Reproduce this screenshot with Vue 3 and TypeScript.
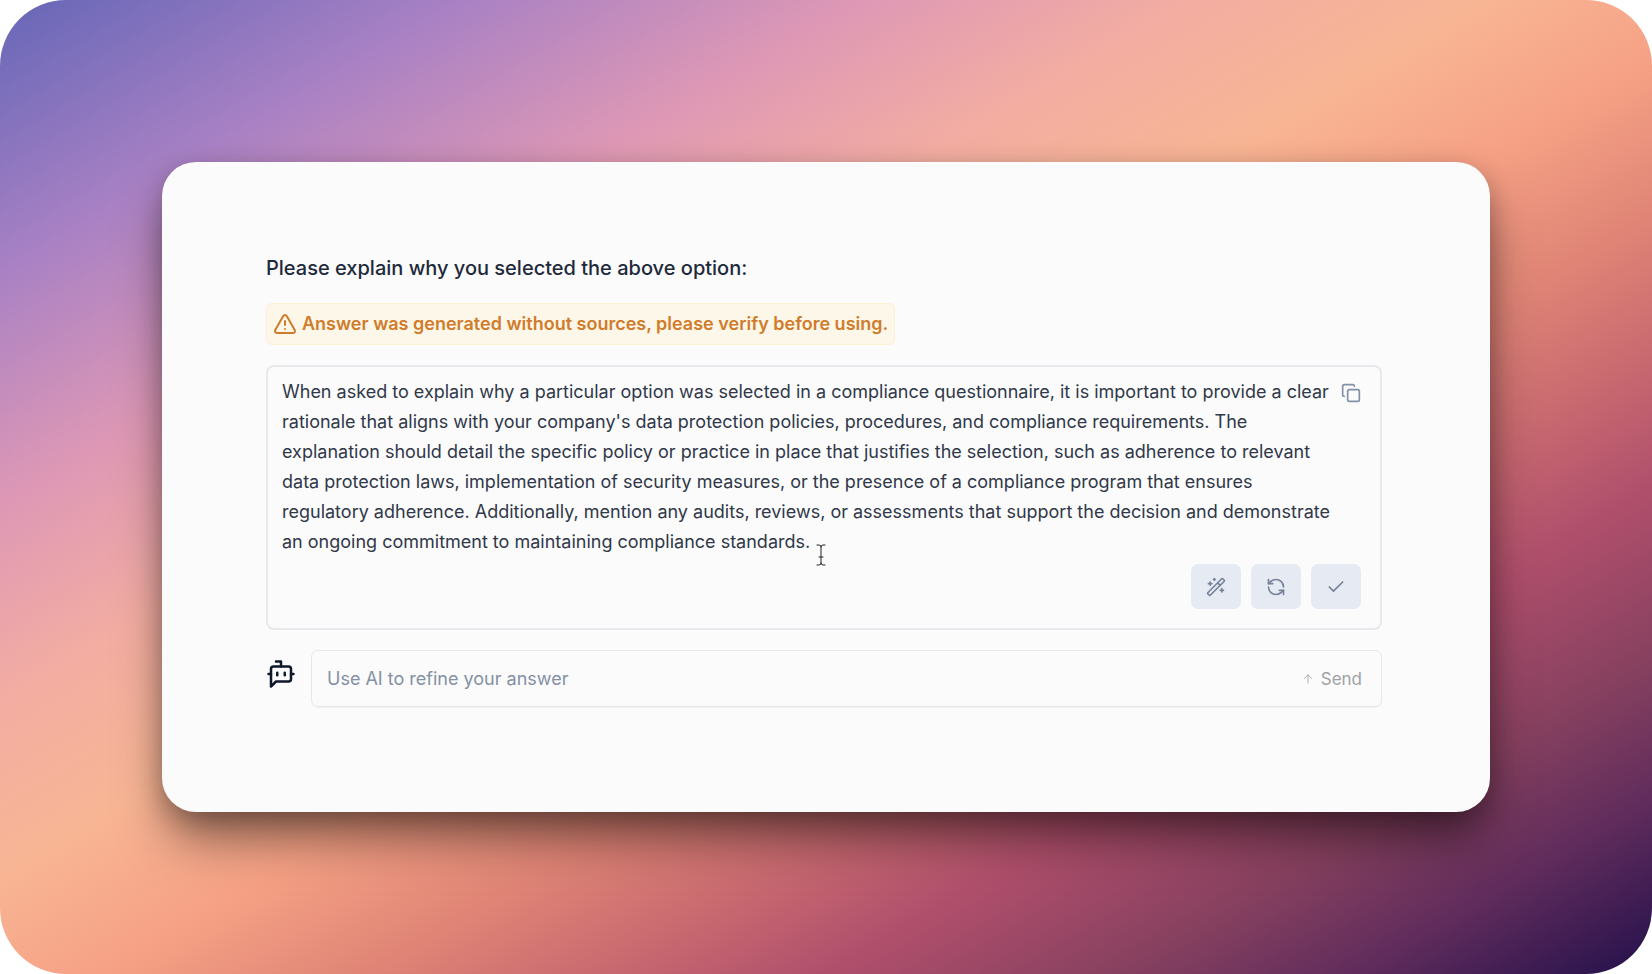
<script setup lang="ts">
import { ref } from 'vue'

const answer = ref<string>(
  "When asked to explain why a particular option was selected in a compliance questionnaire, it is important to provide a clear rationale that aligns with your company's data protection policies, procedures, and compliance requirements. The explanation should detail the specific policy or practice in place that justifies the selection, such as adherence to relevant data protection laws, implementation of security measures, or the presence of a compliance program that ensures regulatory adherence. Additionally, mention any audits, reviews, or assessments that support the decision and demonstrate an ongoing commitment to maintaining compliance standards."
)
const prompt = ref<string>('')

interface Action {
  id: string
  label: string
  paths: string[]
}

const actions: Action[] = [
  {
    id: 'improve',
    label: 'Improve answer',
    paths: [
      'm21.64 3.64-1.28-1.28a1.21 1.21 0 0 0-1.72 0L2.36 18.64a1.21 1.21 0 0 0 0 1.72l1.28 1.28a1.2 1.2 0 0 0 1.72 0L21.64 5.36a1.2 1.2 0 0 0 0-1.72',
      'm14 7 3 3',
      'M5 6v4',
      'M19 14v4',
      'M10 2v2',
      'M7 8H3',
      'M21 16h-4',
      'M11 3H9',
    ],
  },
  {
    id: 'regenerate',
    label: 'Regenerate answer',
    paths: [
      'M21 12a9 9 0 0 0-9-9 9.75 9.75 0 0 0-6.74 2.74L3 8',
      'M3 3v5h5',
      'M3 12a9 9 0 0 0 9 9 9.75 9.75 0 0 0 6.74-2.74L21 16',
      'M16 16h5v5',
    ],
  },
  { id: 'accept', label: 'Accept answer', paths: ['M20 6 9 17l-5-5'] },
]

async function copyAnswer(): Promise<void> {
  await navigator.clipboard?.writeText(answer.value)
}
</script>

<template>
  <main class="backdrop">
    <section class="card">
      <label class="question" for="answer">Please explain why you selected the above option:</label>

      <p class="notice" role="status">
        <svg class="notice-icon" viewBox="0 0 24 24" aria-hidden="true">
          <path d="m21.73 18-8-14a2 2 0 0 0-3.48 0l-8 14A2 2 0 0 0 4 21h16a2 2 0 0 0 1.73-3" />
          <path d="M12 9v4" />
          <path d="M12 17h.01" />
        </svg>
        <span>Answer was generated without sources, please verify before using.</span>
      </p>

      <div class="answer-box">
        <div class="answer-main">
          <textarea id="answer" v-model="answer" class="answer" rows="6" spellcheck="false"></textarea>
          <button class="copy" type="button" aria-label="Copy answer" @click="copyAnswer">
            <svg viewBox="0 0 24 24" aria-hidden="true">
              <rect x="8" y="8" width="14" height="14" rx="2" />
              <path d="M4 16c-1.1 0-2-.9-2-2V4c0-1.1.9-2 2-2h10c1.1 0 2 .9 2 2" />
            </svg>
          </button>
        </div>
        <div class="actions">
          <button v-for="a in actions" :key="a.id" class="action" type="button" :aria-label="a.label">
            <svg viewBox="0 0 24 24" aria-hidden="true">
              <path v-for="d in a.paths" :key="d" :d="d" />
            </svg>
          </button>
        </div>
        <svg class="text-cursor" viewBox="0 0 10 22" aria-hidden="true">
          <path d="M1 1h2q2 0 2 2v16q0 2-2 2H1M9 1H7q-2 0-2 2M9 21H7q-2 0-2-2M3 13h4" />
        </svg>
      </div>

      <form class="refine" @submit.prevent>
        <svg class="bot" viewBox="0 0 24 24" aria-hidden="true">
          <path d="M12 6V2H8" />
          <path d="m8 18-4 4V8a2 2 0 0 1 2-2h12a2 2 0 0 1 2 2v8a2 2 0 0 1-2 2Z" />
          <path d="M2 12h2" />
          <path d="M9 11v2" />
          <path d="M15 11v2" />
          <path d="M20 12h2" />
        </svg>
        <div class="refine-field">
          <input v-model="prompt" class="refine-input" type="text" aria-label="Use AI to refine your answer" placeholder="Use AI to refine your answer" />
          <button class="send" type="submit">
            <svg viewBox="0 0 12 12" aria-hidden="true">
              <path d="M6 11V1M1.500 5.500 6 1l4.500 4.500" />
            </svg>
            Send
          </button>
        </div>
      </form>
    </section>
  </main>
</template>

<style>
body {
  background: #ffffff;
}
</style>

<style scoped>
.backdrop {
  box-sizing: border-box;
  min-height: 100vh;
  padding: 162px;
  display: flex;
  align-items: center;
  border-radius: 66px;
  background: linear-gradient(
    to bottom right,
    #6566b7 0%,
    #a981c4 14%,
    #de98b5 26%,
    #f3ada2 36%,
    #f8b594 45%,
    #f6a185 53%,
    #e08576 61%,
    #c96a70 68%,
    #b04f6c 75%,
    #86405f 84%,
    #602c5c 91%,
    #2a134d 99%
  );
  font-family: Inter, "Liberation Sans", sans-serif;
  color: #1e293b;
}

.card {
  box-sizing: border-box;
  flex: 1;
  min-width: 0;
  padding: 92px 108px 105px 104px;
  display: flex;
  flex-direction: column;
  border-radius: 34px;
  background: #fbfbfb;
  box-shadow: 0 30px 50px -6px rgba(0, 0, 0, 0.5), 0 6px 24px rgba(0, 0, 0, 0.2);
}

button {
  padding: 0;
  border: 0;
  background: none;
  font: inherit;
  cursor: pointer;
}

svg {
  display: block;
  fill: none;
  stroke: currentColor;
  stroke-width: 2;
  stroke-linecap: round;
  stroke-linejoin: round;
}

.question {
  font-size: 20px;
  line-height: 28px;
  font-weight: 500;
}

.notice {
  box-sizing: border-box;
  align-self: flex-start;
  height: 42px;
  margin: 21px 0 20px;
  padding: 0 6px;
  display: flex;
  align-items: center;
  gap: 5px;
  border: 1px solid #fcf2cf;
  border-radius: 6px;
  background: #fcf7e8;
  color: #d07c2b;
  font-size: 18px;
  line-height: 24px;
  font-weight: 600;
}

.notice-icon {
  width: 24px;
  height: 24px;
}

.answer-box {
  position: relative;
  padding: 10px 19px 19px 14px;
  border: 2px solid #e8e9ec;
  border-radius: 8px;
}

.answer-main {
  display: flex;
  align-items: flex-start;
  gap: 6px;
}

.answer {
  display: block;
  flex: 1;
  min-width: 0;
  margin: 0;
  padding: 0;
  border: 0;
  outline: 0;
  overflow: hidden;
  resize: none;
  background: transparent;
  color: #303849;
  font-family: inherit;
  font-size: 18px;
  line-height: 30px;
}

.copy {
  margin-top: 6px;
  color: #8391a7;
}

.copy svg {
  width: 20px;
  height: 20px;
}

.actions {
  margin-top: 7px;
  display: flex;
  justify-content: flex-end;
  gap: 10px;
}

.action {
  width: 50px;
  height: 45px;
  display: grid;
  place-items: center;
  border-radius: 7px;
  background: #e6eaf2;
  color: #76839a;
}

.action svg {
  width: 20px;
  height: 20px;
}

.text-cursor {
  position: absolute;
  left: 548px;
  top: 177px;
  width: 10px;
  height: 22px;
  color: #222222;
  stroke-width: 1;
}

.refine {
  margin-top: 20px;
  display: flex;
  align-items: flex-start;
  gap: 15px;
}

.bot {
  width: 30px;
  height: 30px;
  margin-top: 9px;
  color: #0f172a;
}

.refine-field {
  box-sizing: border-box;
  flex: 1;
  min-width: 0;
  height: 57px;
  padding: 0 19px 0 15px;
  display: flex;
  align-items: center;
  border: 1px solid #e8e8ea;
  border-radius: 7px;
  box-shadow: 0 1px 1px rgba(0, 0, 0, 0.04);
}

.refine-input {
  flex: 1;
  min-width: 0;
  padding: 0;
  border: 0;
  outline: 0;
  background: transparent;
  color: #303849;
  font-family: inherit;
  font-size: 18px;
  line-height: 24px;
}

.refine-input::placeholder {
  color: #8490a4;
  opacity: 1;
}

.send {
  display: flex;
  align-items: center;
  gap: 8px;
  color: #a0a1a5;
  font-size: 17px;
  line-height: 24px;
}

.send svg {
  width: 10px;
  height: 12px;
  stroke-width: 1;
}
</style>
